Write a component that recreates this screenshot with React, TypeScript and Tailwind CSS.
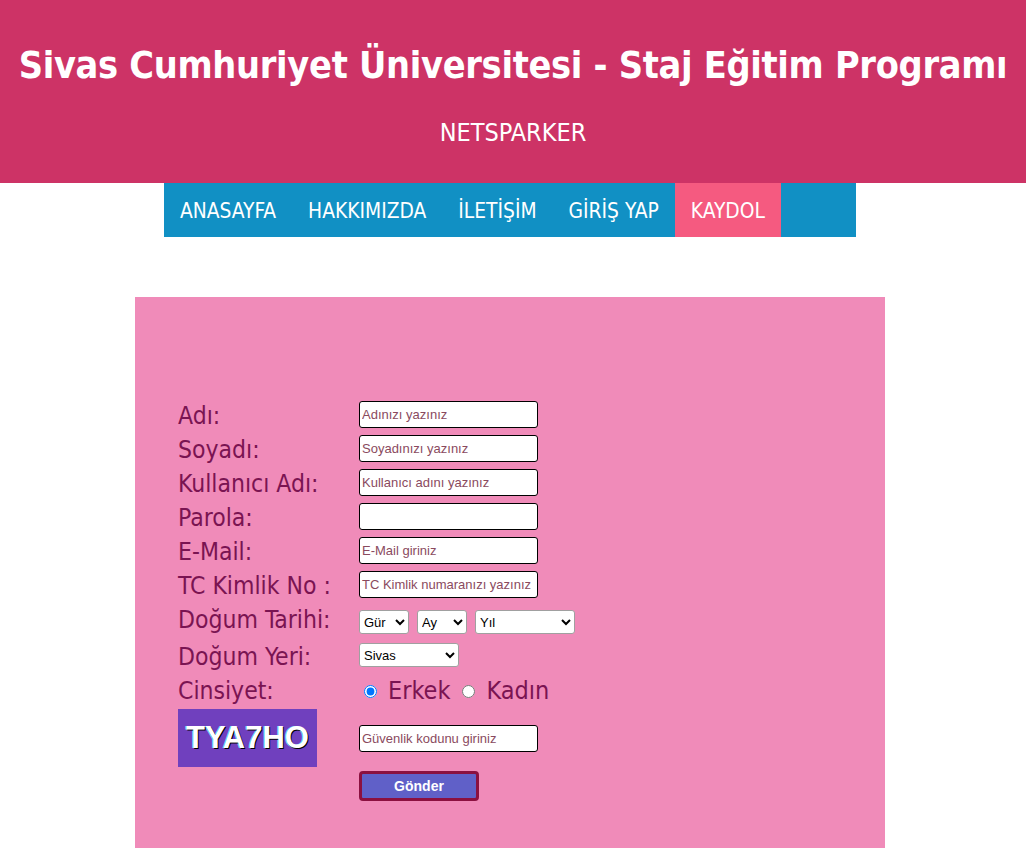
import { useState } from 'react';

const labelFont = "[font-family:'DejaVu_Sans_Condensed','DejaVu_Sans',sans-serif]";

export default function App() {
  const [gender, setGender] = useState('erkek');

  const textRows = [
    { label: 'Adı:', ph: 'Adınızı yazınız', type: 'text' },
    { label: 'Soyadı:', ph: 'Soyadınızı yazınız', type: 'text' },
    { label: 'Kullanıcı Adı:', ph: 'Kullanıcı adını yazınız', type: 'text' },
    { label: 'Parola:', ph: '', type: 'password' },
    { label: 'E-Mail:', ph: 'E-Mail giriniz', type: 'text' },
    { label: 'TC Kimlik No :', ph: 'TC Kimlik numaranızı yazınız', type: 'text' },
  ];

  const inputCls =
    "w-[179px] h-[27px] bg-white border border-black rounded-[3px] px-[2px] text-[13px] text-[#7a2a55] placeholder:text-[#8a4a5e] [font-family:'Liberation_Sans',Arial,sans-serif] outline-none";
  const selectCls =
    "h-[24px] bg-white border border-[#a0a0a0] rounded-[3px] text-[13px] text-black [font-family:'Liberation_Sans',Arial,sans-serif]";

  return (
    <div className={`min-h-[848px] bg-white ${labelFont}`}>
      {/* header */}
      <header className="h-[183px] bg-[#cd3366] flex flex-col items-center text-white">
        <h1 className="mt-[43px] text-[37.5px] leading-[44px] font-bold tracking-[-0.3px] whitespace-nowrap">
          Sivas Cumhuriyet Üniversitesi - Staj Eğitim Programı
        </h1>
        <div className="mt-[31px] text-[25px] leading-[30px]">NETSPARKER</div>
      </header>

      {/* nav */}
      <nav className="ml-[164px] w-[692px] h-[54px] bg-[#1190c4] flex text-white text-[20.8px]">
        {['ANASAYFA', 'HAKKIMIZDA', 'İLETİŞİM', 'GİRİŞ YAP'].map((n) => (
          <a key={n} className="px-[16px] pt-[4px] flex items-center">
            {n}
          </a>
        ))}
        <a className="px-[16px] pt-[4px] flex items-center bg-[#f55a80]">KAYDOL</a>
      </nav>

      {/* form panel */}
      <section className="mt-[60px] ml-[135px] w-[750px] h-[560px] bg-[#f08bb9] pl-[43px] pt-[100px] text-[#7a1452]">
        {textRows.map((r) => (
          <div key={r.label} className="flex items-center h-[34px]">
            <div className="w-[181px] text-[24.5px] leading-[28px] mt-[3px]">{r.label}</div>
            <input type={r.type} placeholder={r.ph} className={inputCls} />
          </div>
        ))}

        <div className="flex items-center h-[38px]">
          <div className="w-[181px] text-[24.5px] leading-[28px] -mt-[1px]">Doğum Tarihi:</div>
          <div className="flex gap-[8px] mt-[4px]">
            <select className={`${selectCls} w-[50px]`} defaultValue="g">
              <option value="g">Gür</option>
            </select>
            <select className={`${selectCls} w-[50px]`} defaultValue="a">
              <option value="a">Ay</option>
            </select>
            <select className={`${selectCls} w-[100px]`} defaultValue="y">
              <option value="y">Yıl</option>
            </select>
          </div>
        </div>

        <div className="flex items-center h-[32px]">
          <div className="w-[181px] text-[24.5px] leading-[28px] mt-[3px]">Doğum Yeri:</div>
          <select className={`${selectCls} w-[100px]`} defaultValue="sivas">
            <option value="sivas">Sivas</option>
          </select>
        </div>

        <div className="flex items-center h-[38px]">
          <div className="w-[181px] text-[24.5px] leading-[28px] mt-[2px]">Cinsiyet:</div>
          <label className="flex items-center text-[25px] leading-[28px] mt-[2px]">
            <input
              type="radio"
              name="g"
              checked={gender === 'erkek'}
              onChange={() => setGender('erkek')}
              className="w-[13px] h-[13px] ml-[5px] mr-[11px]"
            />
            Erkek
          </label>
          <label className="flex items-center text-[25px] leading-[28px] mt-[2px]">
            <input
              type="radio"
              name="g"
              checked={gender === 'kadin'}
              onChange={() => setGender('kadin')}
              className="w-[13px] h-[13px] ml-[12px] mr-[11px]"
            />
            Kadın
          </label>
        </div>

        <div className="flex items-center">
          <div className="w-[181px]">
            <div className="w-[139px] h-[58px] bg-[#7040be] flex items-center justify-center text-white text-[31px] font-bold [font-family:'Liberation_Sans',Arial,sans-serif] [text-shadow:1px_1px_0_#000,-1px_0_0_#5ad0ff]">
              TYA7HO
            </div>
          </div>
          <input placeholder="Güvenlik kodunu giriniz" className={inputCls} />
        </div>

        <div className="flex mt-[4px]">
          <div className="w-[181px]" />
          <button className="w-[120px] h-[30px] bg-[#6060c8] border-[3px] border-[#8b1040] rounded-[4px] text-white text-[14px] font-bold [font-family:'Liberation_Sans',Arial,sans-serif]">
            Gönder
          </button>
        </div>
      </section>
    </div>
  );
}
